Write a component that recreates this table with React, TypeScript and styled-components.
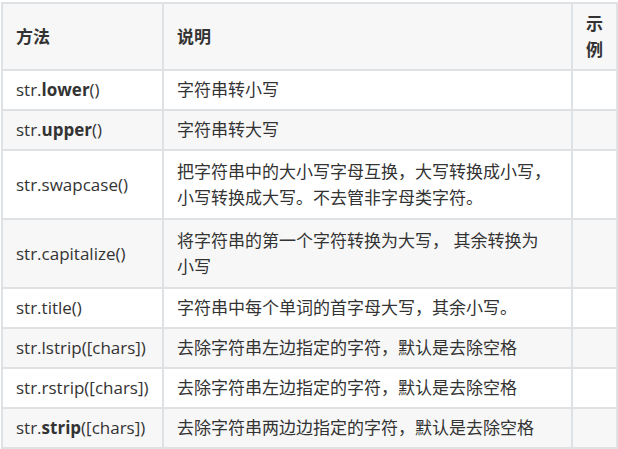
import styled, { createGlobalStyle } from "styled-components";

const GlobalStyle = createGlobalStyle`
  html, body {
    margin: 0;
    padding: 0;
    background: #ffffff;
  }
  body {
    font-family: "Open Sans", "Noto Sans CJK SC", sans-serif;
    color: #333333;
  }
`;

const Page = styled.div`
  padding: 2px 0 0 1px;
`;

const Table = styled.div`
  display: grid;
  grid-template-columns: 159px 407px 43px;
  gap: 2px;
  padding: 2px;
  width: 617px;
  box-sizing: border-box;
  background: #dfe2e5;
`;

const HeadCell = styled.div`
  display: flex;
  align-items: center;
  padding: 6.5px 13px;
  background: #f7f7f7;
  font-size: 17px;
  line-height: 26px;
  font-weight: 700;
  word-break: break-all;
`;

const Cell = styled.div<{ $shaded: boolean; $tall: boolean; $wide?: boolean }>`
  display: flex;
  align-items: center;
  padding: ${(p) => (p.$tall ? "7.5px" : "6px")} ${(p) => (p.$wide ? "18px" : "13px")}
    ${(p) => (p.$tall ? "7.5px" : "6px")} 13px;
  background: ${(p) => (p.$shaded ? "#f7f7f7" : "#ffffff")};
  font-size: 17px;
  line-height: 26px;
`;

const Text = styled.span``;

const Strong = styled.b`
  font-weight: 700;
`;

type Row = {
  pre: string;
  bold?: string;
  post: string;
  desc: string;
  tall?: boolean;
};

const rows: Row[] = [
  { pre: "str.", bold: "lower", post: "()", desc: "字符串转小写" },
  { pre: "str.", bold: "upper", post: "()", desc: "字符串转大写" },
  {
    pre: "str.swapcase()",
    post: "",
    desc: "把字符串中的大小写字母互换，大写转换成小写，小写转换成大写。不去管非字母类字符。",
    tall: true,
  },
  {
    pre: "str.capitalize()",
    post: "",
    desc: "将字符串的第一个字符转换为大写， 其余转换为小写",
    tall: true,
  },
  { pre: "str.title()", post: "", desc: "字符串中每个单词的首字母大写，其余小写。" },
  { pre: "str.lstrip([chars])", post: "", desc: "去除字符串左边指定的字符，默认是去除空格" },
  { pre: "str.rstrip([chars])", post: "", desc: "去除字符串左边指定的字符，默认是去除空格" },
  { pre: "str.", bold: "strip", post: "([chars])", desc: "去除字符串两边边指定的字符，默认是去除空格" },
];

export default function App() {
  return (
    <Page>
      <GlobalStyle />
      <Table>
        <HeadCell>方法</HeadCell>
        <HeadCell>说明</HeadCell>
        <HeadCell>示例</HeadCell>
        {rows.map((r, i) => {
          const shaded = i % 2 === 1;
          const tall = !!r.tall;
          return [
            <Cell key={`m${i}`} $shaded={shaded} $tall={tall}>
              <Text>
                {r.pre}
                {r.bold && <Strong>{r.bold}</Strong>}
                {r.post}
              </Text>
            </Cell>,
            <Cell key={`d${i}`} $shaded={shaded} $tall={tall} $wide>
              <Text>{r.desc}</Text>
            </Cell>,
            <Cell key={`e${i}`} $shaded={shaded} $tall={tall} />,
          ];
        })}
      </Table>
    </Page>
  );
}
